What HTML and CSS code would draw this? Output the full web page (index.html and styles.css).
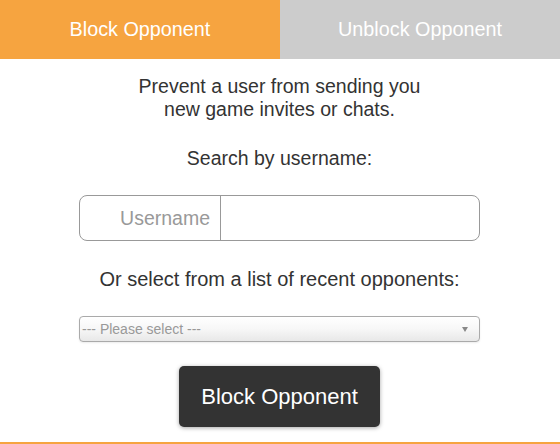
FILE: index.html
```html
<!DOCTYPE html>
<html>
<head>
<meta charset="utf-8">
<link rel="stylesheet" href="styles.css">
</head>
<body>
<div class="page">
  <div class="tabs">
    <div class="tab active">Block Opponent</div>
    <div class="tab">Unblock Opponent</div>
  </div>
  <div class="content">
    <p class="intro">Prevent a user from sending you<br>new game invites or chats.</p>
    <p class="label">Search by username:</p>
    <div class="input-group">
      <span class="addon">Username</span>
      <span class="field"></span>
    </div>
    <p class="label or">Or select from a list of recent opponents:</p>
    <div class="select">
      <span>--- Please select ---</span>
      <span class="arrow"></span>
    </div>
    <button class="btn">Block Opponent</button>
  </div>
  <div class="bottom-line"></div>
</div>
</body>
</html>
```
FILE: styles.css
```css
html, body {
  margin: 0;
  padding: 0;
  background: #fff;
}
body {
  font-family: "Liberation Sans", Arial, sans-serif;
  color: #333;
}
.page {
  width: 560px;
  height: 444px;
  display: flex;
  flex-direction: column;
}
.tabs {
  display: flex;
  height: 59px;
}
.tab {
  flex: 1;
  display: flex;
  align-items: center;
  justify-content: center;
  background: #cccccc;
  color: #fff;
  font-size: 19.8px;
}
.tab.active {
  background: #f6a440;
}
.content {
  flex: 1;
  display: flex;
  flex-direction: column;
  align-items: center;
  text-align: center;
  padding-right: 1px;
}
.intro {
  margin: 16px 0 0;
  font-size: 19.5px;
  line-height: 23px;
}
.label {
  margin: 26px 0 0;
  font-size: 19.5px;
  line-height: 23px;
}
.input-group {
  margin-top: 25px;
  width: 401px;
  height: 46px;
  box-sizing: border-box;
  border: 1px solid #999;
  border-radius: 8px;
  display: flex;
}
.addon {
  width: 130px;
  padding-right: 10px;
  border-right: 1px solid #999;
  display: flex;
  align-items: center;
  justify-content: flex-end;
  color: #999;
  font-size: 19.5px;
}
.field {
  flex: 1;
}
.or {
  margin-top: 27px;
  font-size: 20px;
}
.select {
  margin-top: 25px;
  width: 401px;
  height: 26px;
  box-sizing: border-box;
  padding: 0 11px 0 2px;
  border: 1px solid #aaa;
  border-radius: 4px;
  background: linear-gradient(#ffffff 0%, #f7f7f7 50%, #e8e8e8 100%);
  box-shadow: 0 1px 2px rgba(0,0,0,0.08);
  display: flex;
  align-items: center;
  justify-content: space-between;
  color: #999;
  font-size: 14px;
  text-align: left;
}
.arrow {
  width: 0;
  height: 0;
  border-left: 3.5px solid transparent;
  border-right: 3.5px solid transparent;
  border-top: 5px solid #888;
}
.btn {
  margin-top: 24px;
  width: 201px;
  height: 61px;
  border: none;
  border-radius: 5px;
  background: #333;
  color: #fff;
  font-family: "Liberation Sans", Arial, sans-serif;
  font-size: 22px;
  box-shadow: 0 1px 4px rgba(0,0,0,0.35);
}
.bottom-line {
  height: 2px;
  background: #f6a440;
}
```
